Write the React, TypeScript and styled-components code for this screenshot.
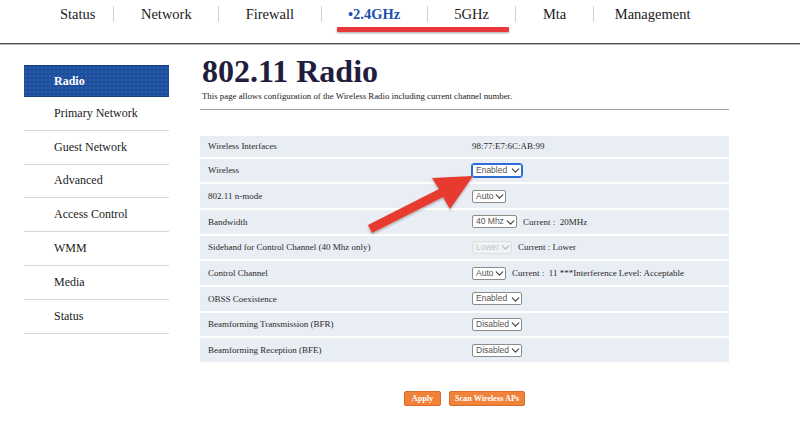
import styled, { createGlobalStyle } from "styled-components";
import { ChevronDown } from "lucide-react";

const GlobalStyle = createGlobalStyle`
  html, body {
    margin: 0;
    padding: 0;
    background: #ffffff;
  }
  body {
    font-family: "Liberation Serif", "Times New Roman", serif;
    color: #222222;
  }
`;

interface SettingRow {
    label: string;
    value?: string;
    options?: string[];
    width?: number;
    focused?: boolean;
    disabled?: boolean;
    note?: string;
    short?: boolean;
}

const navItems = ["Status", "Network", "Firewall", "•2.4GHz", "5GHz", "Mta", "Management"];
const sideItems = ["Radio", "Primary Network", "Guest Network", "Advanced", "Access Control", "WMM", "Media", "Status"];

const rows: SettingRow[] = [
    { label: "Wireless Interfaces", value: "98:77:E7:6C:AB:99", short: true },
    { label: "Wireless", options: ["Enabled", "Disabled"], width: 50, focused: true },
    { label: "802.11 n-mode", options: ["Auto"], width: 34 },
    { label: "Bandwidth", options: ["40 Mhz"], width: 45, note: "Current :  20MHz" },
    { label: "Sideband for Control Channel (40 Mhz only)", options: ["Lower"], width: 40, disabled: true, note: "Current : Lower" },
    { label: "Control Channel", options: ["Auto"], width: 34, note: "Current :  11 ***Interference Level: Acceptable" },
    { label: "OBSS Coexistence", options: ["Enabled", "Disabled"], width: 50 },
    { label: "Beamforming Transmission (BFR)", options: ["Disabled", "Enabled"], width: 50 },
    { label: "Beamforming Reception (BFE)", options: ["Disabled", "Enabled"], width: 50 },
];

const App = () => {
    return (
        <Page>
            <GlobalStyle />
            <Header>
                <Nav>
                    {navItems.map((item, i) => (
                        <NavItem key={item} $active={i === 3}>
                            {item}
                        </NavItem>
                    ))}
                </Nav>
            </Header>
            <Body>
                <Sidebar>
                    {sideItems.map((item, i) => (
                        <SideItem key={item + i} $active={i === 0}>
                            {item}
                        </SideItem>
                    ))}
                </Sidebar>
                <Main>
                    <Title>802.11 Radio</Title>
                    <Subtitle>This page allows configuration of the Wireless Radio including current channel number.</Subtitle>
                    <Rule />
                    <Table>
                        {rows.map((row) => (
                            <Row key={row.label} $short={row.short}>
                                <Label>{row.label}</Label>
                                <Value>
                                    {row.value}
                                    {row.options && (
                                        <SelectWrap>
                                            <Select
                                                $w={row.width || 40}
                                                $focused={row.focused}
                                                disabled={row.disabled}
                                                defaultValue={row.options[0]}
                                            >
                                                {row.options.map((o) => (
                                                    <option key={o}>{o}</option>
                                                ))}
                                            </Select>
                                            <Chevron $disabled={row.disabled}>
                                                <ChevronDown size={13} strokeWidth={2.2} />
                                            </Chevron>
                                        </SelectWrap>
                                    )}
                                    {row.note && <Note>{row.note}</Note>}
                                </Value>
                            </Row>
                        ))}
                    </Table>
                    <Buttons>
                        <Button>Apply</Button>
                        <Button>Scan Wireless APs</Button>
                    </Buttons>
                </Main>
            </Body>
            <Annotation width="800" height="431" viewBox="0 0 800 431">
                <defs>
                    <filter id="shade" x="-10%" y="-10%" width="120%" height="140%">
                        <feDropShadow dx="0" dy="1.5" stdDeviation="1.2" floodColor="#000" floodOpacity="0.3" />
                    </filter>
                </defs>
                <rect x="337" y="27" width="172" height="5" rx="1" fill="#e8383a" filter="url(#shade)" />
                <polygon
                    points="368,225 439,189 432,178 473,176 450,209 443,197 372,233"
                    fill="#e63a2f"
                    filter="url(#shade)"
                />
            </Annotation>
        </Page>
    );
};

const Page = styled.div`
    position: relative;
    width: 800px;
    height: 431px;
    overflow: hidden;
`;

const Header = styled.div`
    height: 43px;
    border-bottom: 1px solid #4d4d4d;
    box-shadow: 0 1px 0 #b8b8b8;
    display: flex;
    align-items: flex-start;
`;

const Nav = styled.div`
    display: flex;
    align-items: center;
    padding-left: 60px;
    padding-top: 6px;
`;

const NavItem = styled.div<{ $active?: boolean }>`
    font-size: 14.5px;
    line-height: 16px;
    padding: 0 26.5px;
    color: ${(p) => (p.$active ? "#1a4fae" : "#1a1a1a")};
    font-weight: ${(p) => (p.$active ? "bold" : "normal")};
    border-left: 1px solid #d0d0d0;

    &:first-child {
        padding-left: 0;
        padding-right: 18px;
        border-left: none;
    }
    &:last-child {
        padding-left: 21px;
        padding-right: 0;
    }
`;

const Body = styled.div`
    display: flex;
    align-items: flex-start;
`;

const Sidebar = styled.div`
    width: 145px;
    margin: 21px 0 0 24px;
    display: flex;
    flex-direction: column;
`;

const SideItem = styled.div<{ $active?: boolean }>`
    height: 32.8px;
    display: flex;
    align-items: center;
    padding-left: 30px;
    font-size: 12px;
    color: ${(p) => (p.$active ? "#ffffff" : "#1a1a1a")};
    font-weight: ${(p) => (p.$active ? "bold" : "normal")};
    border-bottom: 1px solid ${(p) => (p.$active ? "#173f85" : "#d6d7de")};
    background-color: ${(p) => (p.$active ? "#1d4f9f" : "transparent")};
    background-image: ${(p) =>
        p.$active ? "radial-gradient(rgba(255,255,255,0.13) 0.6px, transparent 0.9px)" : "none"};
    background-size: 4px 4px;
    ${(p) => (p.$active ? "height: 30px; border-top: 1px solid #173f85;" : "")}
`;

const Main = styled.div`
    width: 529px;
    margin-left: 31px;
    padding-top: 9px;
    display: flex;
    flex-direction: column;
`;

const Title = styled.h1`
    margin: 0 0 0 2px;
    font-size: 32px;
    line-height: 36px;
    font-weight: bold;
    color: #221d3d;
`;

const Subtitle = styled.p`
    margin: 2px 0 0 2px;
    font-size: 8.8px;
    line-height: 11px;
    color: #222;
`;

const Rule = styled.div`
    height: 1px;
    background: #a0a0a0;
    margin-top: 7px;
`;

const Table = styled.div`
    margin-top: 26px;
    display: flex;
    flex-direction: column;
    gap: 2px;
`;

const Row = styled.div<{ $short?: boolean }>`
    display: grid;
    grid-template-columns: 272px 1fr;
    align-items: center;
    min-height: ${(p) => (p.$short ? "20.5px" : "23.7px")};
    background: #e9edf4;
`;

const Label = styled.div`
    padding-left: 8px;
    font-size: 9px;
    color: #2a2a2a;
`;

const Value = styled.div`
    display: flex;
    align-items: center;
    font-size: 9px;
    color: #2a2a2a;
`;

const SelectWrap = styled.span`
    position: relative;
    display: inline-flex;
`;

const Select = styled.select<{ $w: number; $focused?: boolean }>`
    appearance: none;
    -webkit-appearance: none;
    box-sizing: border-box;
    width: ${(p) => p.$w}px;
    height: 13px;
    margin: 0;
    padding: 0 0 0 3px;
    font-family: "Liberation Sans", Arial, sans-serif;
    font-size: 8.5px;
    line-height: 11px;
    color: #555;
    background: #fff;
    border: 1px solid ${(p) => (p.$focused ? "#2d6bd6" : "#8c8c8c")};
    border-radius: 2px;
    outline: ${(p) => (p.$focused ? "0.6px solid #2d6bd6" : "none")};

    &:disabled {
        color: #b0b0b0;
        border-color: #d8d8d8;
        background: #f5f5f5;
    }
`;

const Chevron = styled.span<{ $disabled?: boolean }>`
    position: absolute;
    right: 0;
    top: 0.5px;
    display: flex;
    color: ${(p) => (p.$disabled ? "#b8b8b8" : "#444")};
    pointer-events: none;
`;

const Note = styled.span`
    margin-left: 6px;
    white-space: pre;
`;

const Buttons = styled.div`
    display: flex;
    justify-content: center;
    gap: 8px;
    margin-top: 29px;
`;

const Button = styled.button`
    box-sizing: border-box;
    min-width: 37px;
    height: 15px;
    padding: 0 5px;
    font-family: "Liberation Serif", "Times New Roman", serif;
    font-size: 8.2px;
    font-weight: bold;
    color: #ffffff;
    background: #f0823a;
    border: 1px solid #d96a28;
    border-radius: 2px;
`;

const Annotation = styled.svg`
    position: absolute;
    top: 0;
    left: 0;
    pointer-events: none;
`;

export default App;
